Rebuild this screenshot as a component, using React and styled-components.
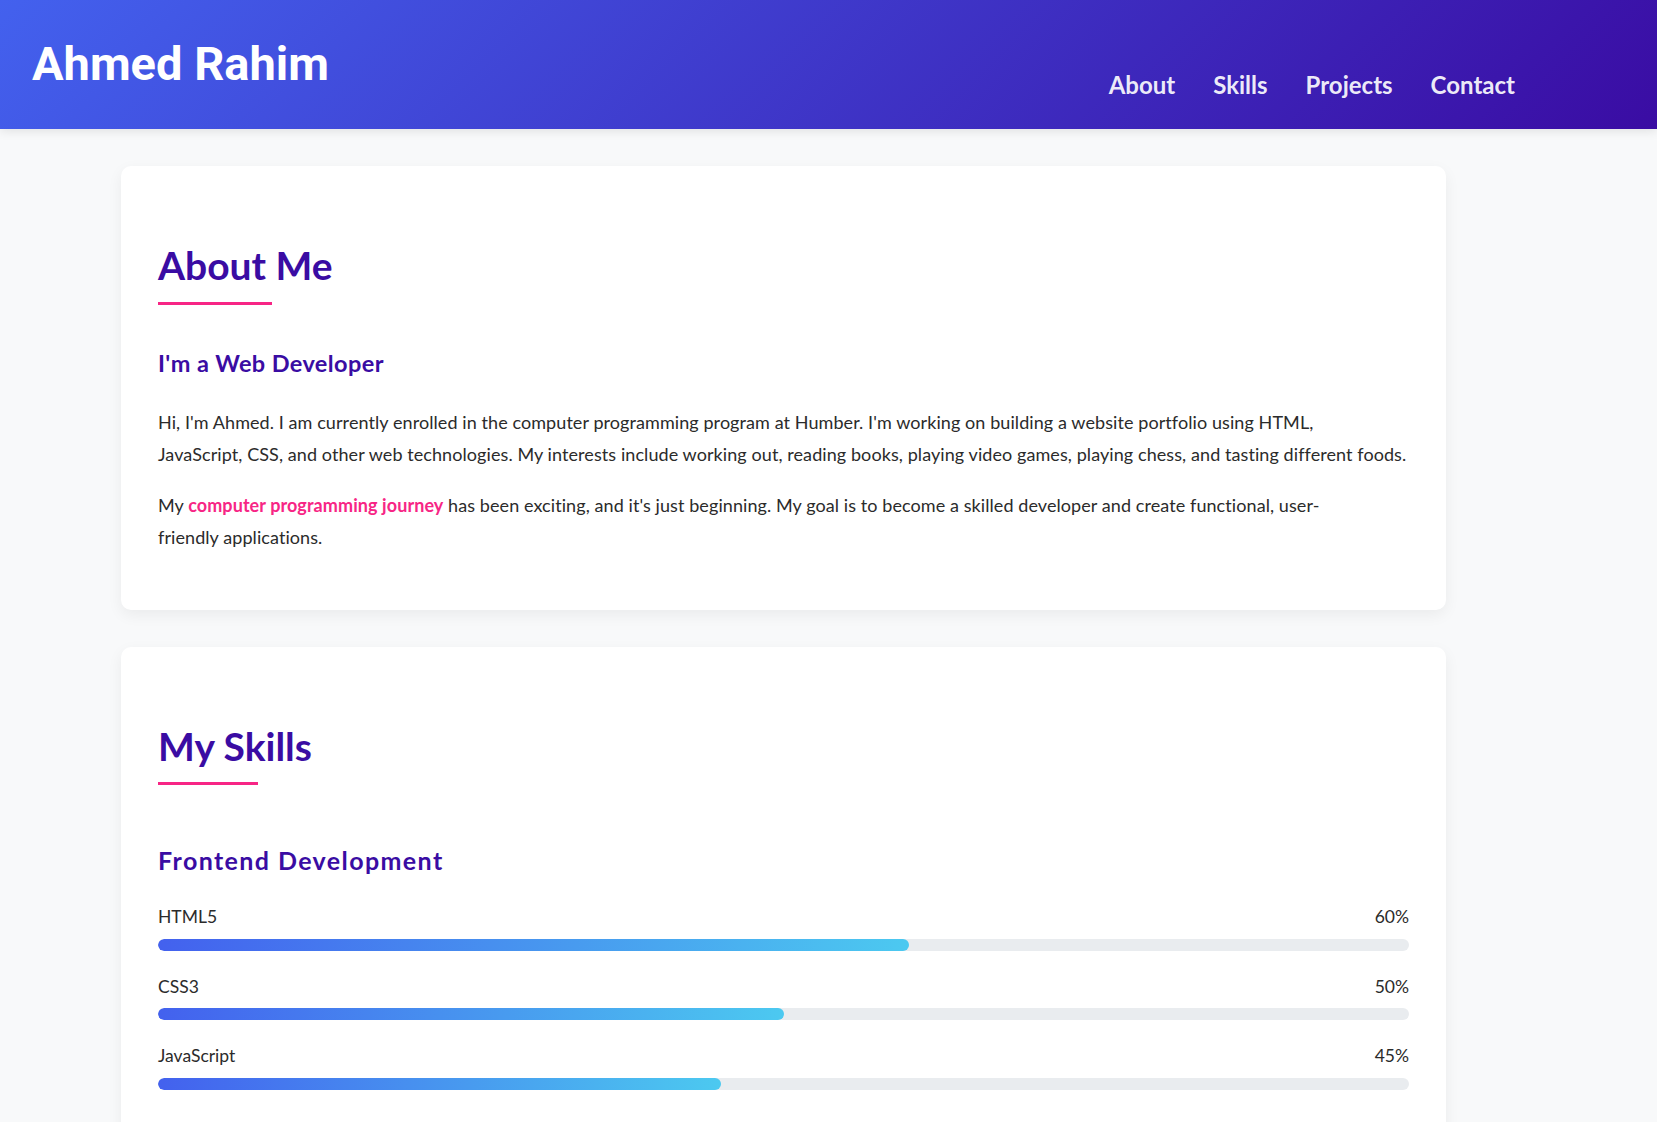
import React from "react";
import styled, { createGlobalStyle } from "styled-components";

const GlobalStyle = createGlobalStyle`
  * {
    box-sizing: border-box;
  }
  body {
    margin: 0;
    background: #f8f9fa;
    font-family: Lato, "Open Sans", sans-serif;
    color: #333;
  }
`;

const Header = styled.header`
  height: 129px;
  padding: 0 32px;
  display: flex;
  justify-content: space-between;
  align-items: flex-start;
  background: linear-gradient(135deg, #4361ee, #3a0ca3);
  box-shadow: 0 2px 10px rgba(0, 0, 0, 0.1);
`;

const Logo = styled.h1`
  margin: 36px 0 0;
  font-family: Roboto, "Liberation Sans", sans-serif;
  font-size: 47px;
  line-height: 1.2;
  font-weight: 700;
  color: #fff;
`;

const Nav = styled.nav`
  margin: 71px 110px 0 0;
  display: flex;
  gap: 38px;
`;

const NavLink = styled.a`
  font-size: 24px;
  line-height: 1.2;
  font-weight: 700;
  color: rgba(255, 255, 255, 0.92);
  text-decoration: none;
`;

const Main = styled.main`
  width: 1325px;
  margin-left: 121px;
  padding-top: 37px;
  display: flex;
  flex-direction: column;
  gap: 37px;
`;

const Card = styled.section`
  background: #fff;
  border-radius: 10px;
  padding: 37px 37px 36px;
  box-shadow: 0 5px 15px rgba(0, 0, 0, 0.06);
`;

const Title = styled.h2`
  position: relative;
  display: inline-block;
  margin: 39px 0 44px;
  padding-bottom: 16px;
  font-size: 39px;
  line-height: 1.2;
  font-weight: 700;
  color: #3a0ca3;

  &::after {
    content: "";
    position: absolute;
    left: 0;
    bottom: 0;
    width: 65%;
    height: 3px;
    background: #f72585;
  }
`;

const Subtitle = styled.h3`
  margin: 0 0 29px;
  font-size: 23.5px;
  line-height: 29px;
  letter-spacing: 0.4px;
  font-weight: 700;
  color: #3a0ca3;
`;

const Category = styled(Subtitle)`
  margin-top: 17px;
  font-size: 25px;
  letter-spacing: 1.4px;
`;

const Text = styled.p`
  margin: 0 0 20px;
  font-size: 18px;
  line-height: 31.7px;
  letter-spacing: 0.08px;
  color: #2b2b2b;
`;

const Highlight = styled.span`
  color: #f72585;
  font-weight: 700;
`;

const Skill = styled.div`
  margin-bottom: 23px;
`;

const SkillHead = styled.div`
  display: flex;
  justify-content: space-between;
  font-size: 17.5px;
  line-height: 25.5px;
  margin-bottom: 9px;
  color: #2b2b2b;
`;

const Track = styled.div`
  height: 12px;
  border-radius: 6px;
  background: #e9ecef;
  overflow: hidden;
`;

const Fill = styled.div`
  height: 100%;
  border-radius: 6px;
  background: linear-gradient(90deg, #4361ee, #4cc9f0);
`;

const skills = [
  { name: "HTML5", level: 60 },
  { name: "CSS3", level: 50 },
  { name: "JavaScript", level: 45 },
];

export default function App() {
  return (
    <>
      <GlobalStyle />
      <Header>
        <Logo>Ahmed Rahim</Logo>
        <Nav>
          <NavLink href="#about">About</NavLink>
          <NavLink href="#skills">Skills</NavLink>
          <NavLink href="#projects">Projects</NavLink>
          <NavLink href="#contact">Contact</NavLink>
        </Nav>
      </Header>
      <Main>
        <Card id="about">
          <Title>About Me</Title>
          <Subtitle>I'm a Web Developer</Subtitle>
          <Text>
            Hi, I'm Ahmed. I am currently enrolled in the computer programming program at Humber. I'm working on
            building a website portfolio using HTML,
            <br />
            JavaScript, CSS, and other web technologies. My interests include working out, reading books, playing video
            games, playing chess, and tasting different foods.
          </Text>
          <Text>
            My <Highlight>computer programming journey</Highlight> has been exciting, and it's just beginning. My goal
            is to become a skilled developer and create functional, user-
            <br />
            friendly applications.
          </Text>
        </Card>
        <Card id="skills">
          <Title>My Skills</Title>
          <Category>Frontend Development</Category>
          {skills.map((s) => (
            <Skill key={s.name}>
              <SkillHead>
                <span>{s.name}</span>
                <span>{s.level}%</span>
              </SkillHead>
              <Track>
                <Fill style={{ width: `${s.level}%` }} />
              </Track>
            </Skill>
          ))}
        </Card>
      </Main>
    </>
  );
}
